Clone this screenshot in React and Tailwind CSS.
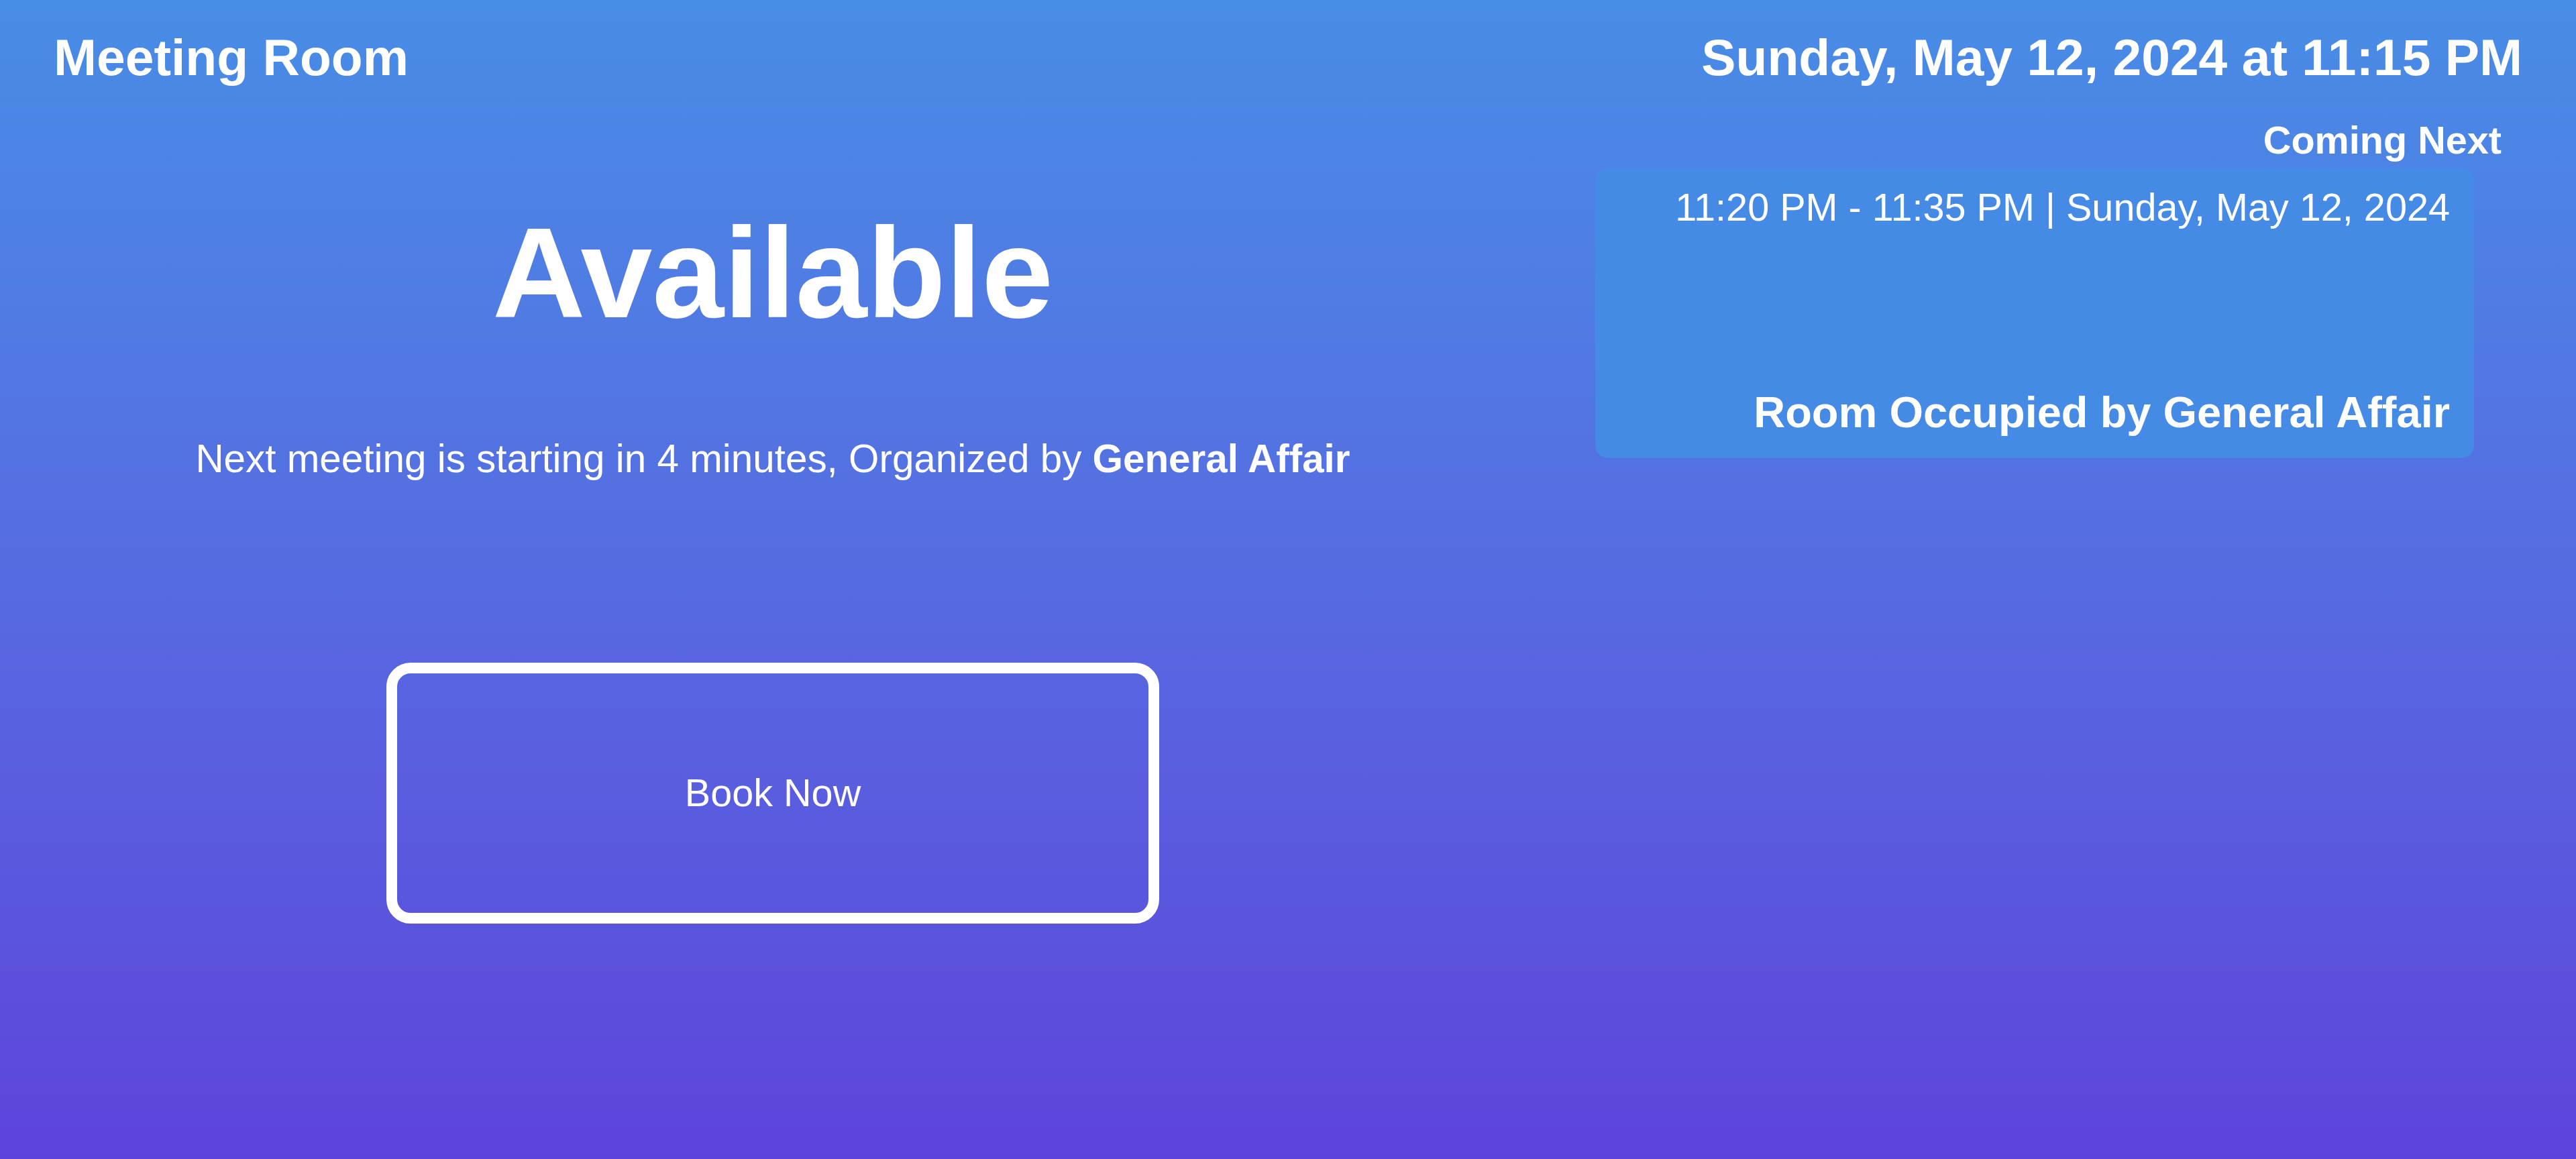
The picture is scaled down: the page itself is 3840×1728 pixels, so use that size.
export default function App() {
  return (
    <div
      className="w-full h-[1728px] overflow-hidden text-white bg-gradient-to-b from-[#478de6] to-[#5d43db]"
      style={{ fontFamily: '"Liberation Sans", Arial, sans-serif' }}
    >
      <header className="flex justify-between items-start px-[80px] pt-[47px]">
        <h1 className="text-[76.8px] leading-none font-bold">Meeting Room</h1>
        <div className="text-[76.8px] leading-none font-bold">Sunday, May 12, 2024 at 11:15 PM</div>
      </header>

      <main className="flex px-[80px] gap-[154px]">
        <section className="w-[2144px] flex flex-col items-center">
          <h2 className="mt-[187px] text-[192px] leading-none font-bold">Available</h2>
          <p className="mt-[152px] text-[58.4px] leading-none">
            Next meeting is starting in 4 minutes, Organized by <span className="font-bold">General Affair</span>
          </p>
          <button className="mt-[275px] w-[1152px] h-[389px] border-[16px] border-white rounded-[36px] flex items-center justify-center text-[57.6px] leading-none text-white">
            Book Now
          </button>
        </section>

        <aside className="flex-1 flex flex-col">
          <div className="mt-[57px] text-right pr-[31px] text-[57.6px] leading-none font-bold">Coming Next</div>
          <div className="mt-[12px] w-[1310px] h-[433px] rounded-[19px] bg-[#458be5] flex flex-col justify-between text-right pl-[36px] pr-[36px] pt-[31px] pb-[36px]">
            <div className="text-[57.6px] leading-none">11:20 PM - 11:35 PM | Sunday, May 12, 2024</div>
            <div className="text-[65px] leading-none font-bold">Room Occupied by General Affair</div>
          </div>
        </aside>
      </main>
    </div>
  );
}
